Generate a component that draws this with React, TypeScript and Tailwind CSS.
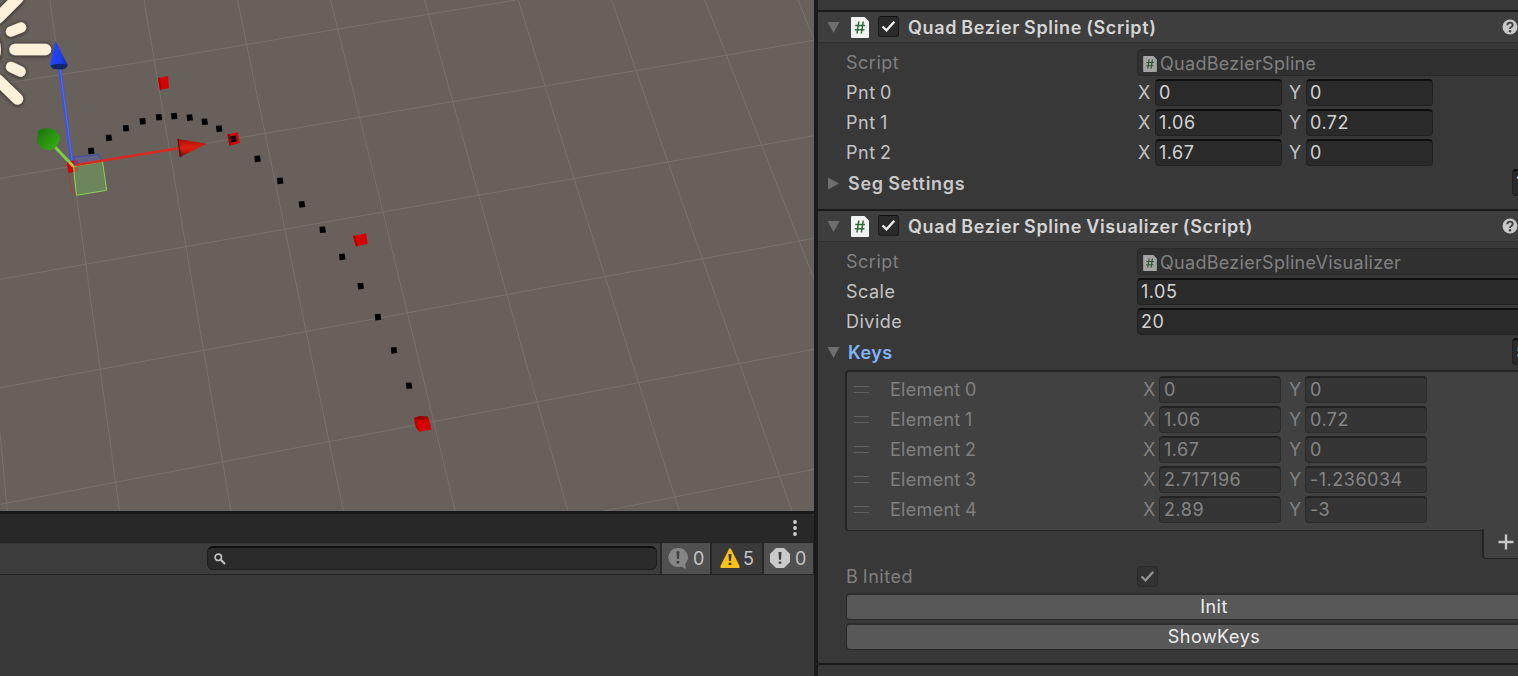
import React from "react";

const FONT = "font-[Inter,'Liberation_Sans',sans-serif]";

const STEEP = [
  "0,432 7.3,511", "50,0 85.8,264 119.5,511", "144,0 186,247 231,511", "237.5,0 284.8,229 343.5,511",
  "330.6,0 383,212 455.3,511", "424.6,0 478.7,195 568,511", "518.2,0 573.8,178 679.3,511",
  "611.7,0 667.9,162 792,511", "704.8,0 762,146 814,279", "798.3,0 814,40",
];
const SHALLOW = [
  "0,84 155,60 338,29 516,0", "0,178.5 265.6,133.3 545,86 814,40.3", "0,279.3 383,212 668,162 814,135.7",
  "0,387.7 408,312.7 814,238.3", "0,504.3 433.5,421.7 814,349.3", "604,511 814,469.3",
];
const DOTS = [
  [91, 151], [108.7, 138], [125.8, 128.3], [142.5, 121.5], [158.8, 117.3], [174, 116.2], [189.5, 117.7],
  [204.5, 121.8], [219, 128.8], [257.3, 159], [280, 181], [301.7, 204.5], [322.4, 229.8], [342, 257],
  [360.5, 286.2], [377.8, 317.2], [393.8, 350.5], [408.8, 385.8],
];

function Scene() {
  return (
    <svg className="block h-[511px] w-[814px] bg-[#67605b]" viewBox="0 0 814 511">
      <defs>
        <linearGradient id="green" x1="0" y1="0" x2="1" y2="1">
          <stop offset="0" stopColor="#1f6d0a" />
          <stop offset="0.45" stopColor="#288f0e" />
          <stop offset="1" stopColor="#36b512" />
        </linearGradient>
        <linearGradient id="red" x1="0" y1="0" x2="0" y2="1">
          <stop offset="0" stopColor="#a31109" />
          <stop offset="0.5" stopColor="#e0200f" />
          <stop offset="0.7" stopColor="#c81a0e" />
          <stop offset="1" stopColor="#5c0c06" />
        </linearGradient>
        <linearGradient id="blue" x1="0" y1="0" x2="1" y2="0">
          <stop offset="0" stopColor="#2146ff" />
          <stop offset="0.6" stopColor="#1c3fe6" />
          <stop offset="1" stopColor="#142c9c" />
        </linearGradient>
        <filter id="glow" x="-50%" y="-50%" width="200%" height="200%">
          <feDropShadow dx="0" dy="0.5" stdDeviation="2" floodColor="#1c1815" floodOpacity="0.75" />
        </filter>
      </defs>
      <g fill="none" stroke="#78726c" strokeWidth="1">
        {STEEP.map((p) => <polyline key={p} points={p} />)}
        {SHALLOW.map((p) => <polyline key={p} points={p} />)}
      </g>
      <g stroke="#fdf1d9" strokeLinecap="round" strokeWidth="11.5" filter="url(#glow)">
        <path d="M15 49.5H45.5M-2 18L18-2M-2 80L17.5 99" />
        <path strokeWidth="10.5" d="M11 31.5L21 27.5M11 67L20.5 71.5" />
        <circle cx="-24" cy="49.5" r="19.2" />
      </g>
      {DOTS.map(([x, y]) => (
        <path key={x} d={`M${x - 3} ${y - 3}l5.600 -.4 .9 6 -5.900 .7z`} fill="#000" />
      ))}
      <g fill="#d60000">
        <path d="M158 78L168 76.300L169 88L160 90Z" />
        <path d="M158 78L160 77.500L161 90L160 90Z" fill="#a90000" />
        <path d="M227.500 134.500L237.500 132.300L239.800 143L229.500 145.800Z" />
        <path d="M227.500 134.500L229.500 134L231 145.500L229.500 145.800Z" fill="#a30000" />
        <path d="M353 236L366 233.300L367.700 243.700L356 246.500Z" />
        <path d="M353 236L355 235.500L357.500 246L356 246.500Z" fill="#a90000" />
        <path d="M414 418L420 416L428.500 417.500L431.500 429.500L419.500 431.700L416 427.500Z" />
        <path d="M414 418L420 416L428 416.500L427.500 419L416.500 420.500Z" fill="#980000" />
        <path d="M414 418L416.500 420L419.500 431.700L416 427.500Z" fill="#b80000" />
        <path d="M66.500 161.500L78 160L79 171L68.500 173Z" />
      </g>
      <path d="M230.300 136.300l5.400-.9.900 6.200-5.600.9z" />
      <path d="M69 173l2 18 6 4" fill="none" stroke="#b5392f" />
      <path d="M74 157L98.500 154.500L102.500 161L75 166z" fill="#5d62a8" fillOpacity=".55" stroke="#3d4eaf" />
      <path d="M73.500 166.500L102.500 161.500L106.700 190.300L76.500 195.300z" fill="#70965a" fillOpacity=".7" stroke="#8bd552" />
      <path d="M59.500 67L71.500 160" stroke="#3a52e8" strokeWidth="3" />
      <path d="M60 67L72 160" stroke="#6c7cf0" strokeWidth="0.6" />
      <path d="M55.500 41L50 65.500Q58.500 68 67.700 65z" fill="url(#blue)" />
      <path d="M50 65.500Q58 62.500 67.700 65Q66.500 68.500 62.500 69.500L53 69Z" fill="#142468" />
      <path d="M76 165L180 148" stroke="#d92a20" strokeWidth="2.400" />
      <path d="M178 139L207 143.800L181 156.500z" fill="url(#red)" />
      <path d="M178 139L181 156.500L180 157Z" fill="#520b06" stroke="#64100a" />
      <path d="M55 147L73 166" stroke="#7bd044" strokeWidth="3" />
      <path d="M70.500 163L74 167.500" stroke="#f0b43c" strokeWidth="2" />
      <path d="M37.800 131Q41 128 49 128Q59 129.500 59.800 138Q59 147 50.500 150Q42 150.500 37 142z" fill="url(#green)" />
    </svg>
  );
}

function ScriptIcon({ small = false }: { small?: boolean }) {
  return (
    <svg className={small ? "h-4 w-[14px] opacity-60" : "h-[21px] w-[18px]"} viewBox="0 0 18 21">
      <path d="M1 0H13.500L18 4.500V20Q18 21 17 21H1Q0 21 0 20V1Q0 0 1 0z" fill="#f2f2f2" />
      <path d="M7.800 4.500L6 16.500M12.200 4.500L10.400 16.500M4.300 8.500H14M3.800 12.800H13.500" stroke="#2c6b34" strokeWidth="1.500" />
    </svg>
  );
}

function Check({ dim = false }: { dim?: boolean }) {
  return (
    <span className={`flex h-[21px] w-[21px] shrink-0 items-center justify-center rounded-[3px] border ${dim ? "border-[#2b2b2b] bg-[#323232]" : "border-[#1b1b1b] border-t-[#101010] bg-[#2a2a2a]"}`}>
      <svg className="h-[15px] w-[15px]" viewBox="0 0 15 15">
        <path d="M1.500 7.500L5.500 11.300L13.300 2.700" fill="none" stroke={dim ? "#929292" : "#ededed"} strokeWidth="2.400" />
      </svg>
    </span>
  );
}

function Arrow({ open = false }: { open?: boolean }) {
  return (
    <svg className="h-[13px] w-[13px] shrink-0" viewBox="0 0 13 13">
      <path d={open ? "M0.500 1H12.500L6.500 12z" : "M1 .5V12.500L12 6.500z"} fill="#6e6e6e" />
    </svg>
  );
}

function Header({ title }: { title: string }) {
  return (
    <div className="flex h-[33px] items-center border-t-2 border-b border-t-[#1a1a1a] border-b-[#303030] bg-[#3e3e3e] pl-[9px]">
      <Arrow open />
      <span className="ml-[11px]"><ScriptIcon /></span>
      <span className="-mt-px ml-[9px]"><Check /></span>
      <span className="ml-[9px] pt-0.5 text-[18px] leading-6 font-semibold tracking-[0.64px] [word-spacing:-1px] text-[#d4d4d4]">{title}</span>
      <svg className="ml-auto h-4 w-4 shrink-0" viewBox="0 0 16 16">
        <circle cx="8" cy="8" r="7.500" fill="#c8c8c8" />
        <path d="M5.300 6.200Q5.300 3.600 8 3.600T10.700 6Q10.700 7.200 9.300 8Q8 8.700 8 9.900" fill="none" stroke="#3e3e3e" strokeWidth="1.900" />
        <circle cx="8" cy="12.200" r="1.200" fill="#3e3e3e" />
      </svg>
    </div>
  );
}

function Field({ value, className = "", dim = false }: { value: string; className?: string; dim?: boolean }) {
  return (
    <span className={`flex h-[27px] shrink-0 items-center overflow-hidden rounded-[4px] border ${dim ? "border-[#2b2b2b] border-t-2 border-t-[#222222] bg-[#353535] text-[#858585]" : "border-[#212121] border-t-2 border-t-[#0e0e0e] bg-[#2a2a2a] text-[#d2d2d2]"} ${className}`}>
      {value}
    </span>
  );
}

function ScriptRow({ name }: { name: string }) {
  return (
    <div className="flex h-[27px] items-center pl-7 text-[#808080]">
      <span className="w-[291px] shrink-0">Script</span>
      <span className="-mr-3 flex h-[27px] flex-1 items-center rounded-[4px] border border-[#292929] bg-[#303030] pt-0.5 pl-[5px]">
        <ScriptIcon small />
        <span className="ml-[3px] tracking-[0.3px]">{name}</span>
      </span>
    </div>
  );
}

function VectorRow({ label, x, y }: { label: string; x: string; y: string }) {
  return (
    <div className="flex h-[27px] items-center pl-7 text-[#c4c4c4]">
      <span className="w-[291px] shrink-0">{label}</span>
      <span className="w-[18px] pl-px">X</span>
      <Field value={x} className="w-[127px] pl-[3px]" />
      <span className="ml-[7px] w-[17px]">Y</span>
      <Field value={y} className="w-[127px] pl-[3px]" />
    </div>
  );
}

function NumberRow({ label, value }: { label: string; value: string }) {
  return (
    <div className="flex h-[27px] items-center pl-7 text-[#c4c4c4]">
      <span className="w-[291px] shrink-0">{label}</span>
      <Field value={value} className="w-[400px] pl-[3px]" />
    </div>
  );
}

function Foldout({ label, open = false, count }: { label: string; open?: boolean; count: string }) {
  return (
    <div className={`flex h-[27px] items-center pl-[9px] font-semibold ${open ? "text-[#81b4ff]" : "text-[#c8c8c8]"}`}>
      <span className="pt-px"><Arrow open={open} /></span>
      <span className={`ml-2 pt-[3px] ${open ? "" : "tracking-[0.75px] [word-spacing:-1px]"}`}>{label}</span>
      <Field value={count} className="-mr-16 ml-auto w-[70px] pl-[3px] font-normal" />
    </div>
  );
}

function ElementRow({ i, x, y }: { i: number; x: string; y: string }) {
  return (
    <div className="flex h-[27px] items-center pl-[7px]">
      <span className="h-[7px] w-[15px] border-y border-[#616161]" />
      <span className="ml-[21px] w-[253px] shrink-0 tracking-[0.3px]">Element {i}</span>
      <span className="w-4">X</span>
      <Field dim value={x} className="w-[122px] pl-1" />
      <span className="ml-2 w-4">Y</span>
      <Field dim value={y} className="w-[122px] pl-1" />
    </div>
  );
}

function InspectorButton({ label }: { label: string }) {
  return (
    <button className="ml-7 flex h-[27px] w-[736px] items-center justify-center rounded-[4px] border border-t-2 border-[#282828] border-t-[#2e2e2e] bg-[#585858] text-[#eeeeee]">
      {label}
    </button>
  );
}

const KEYS = [["0", "0"], ["1.06", "0.72"], ["1.67", "0"], ["2.717196", "-1.236034"], ["2.89", "-3"]];

function Inspector() {
  return (
    <section className="h-full min-w-0 flex-1 overflow-hidden bg-[#383838] pt-[10px] [word-spacing:-1px]">
      <Header title="Quad Bezier Spline (Script)" />
      <div className="mt-[6px] flex flex-col gap-[3px]">
        <ScriptRow name="QuadBezierSpline" />
        <VectorRow label="Pnt 0" x="0" y="0" />
        <VectorRow label="Pnt 1" x="1.06" y="0.72" />
        <VectorRow label="Pnt 2" x="1.67" y="0" />
        <Foldout label="Seg Settings" count="1" />
      </div>
      <div className="mt-[13px]"><Header title="Quad Bezier Spline Visualizer (Script)" /></div>
      <div className="mt-[6px] flex flex-col gap-[3px]">
        <ScriptRow name="QuadBezierSplineVisualizer" />
        <NumberRow label="Scale" value="1.05" />
        <NumberRow label="Divide" value="20" />
        <Foldout label="Keys" open count="5" />
      </div>
      <div className="mt-[5px] -mr-3 ml-[27px] flex h-[161px] flex-col gap-[3px] rounded-[4px] border-t-2 border-b border-l-2 border-[#242424] bg-[#414141] pt-1 text-[#808080]">
        {KEYS.map(([x, y], i) => <ElementRow key={i} i={i} x={x} y={y} />)}
      </div>
      <div className="relative -mt-0.5 -mr-3 ml-auto flex h-[30px] w-[48px] items-center rounded-bl-[4px] border-b border-l-2 border-[#242424] bg-[#414141] pb-1 pl-[14px]">
        <svg className="h-4 w-4" viewBox="0 0 16 16"><path d="M8 .5V15.500M.5 8H15.500" stroke="#c8c8c8" strokeWidth="2.400" /></svg>
      </div>
      <div className="mt-[7px] flex h-[21px] items-center pl-7 text-[#808080]">
        <span className="w-[291px]">B Inited</span>
        <Check dim />
      </div>
      <div className="mt-[6px] flex flex-col gap-[3px]">
        <InspectorButton label="Init" />
        <InspectorButton label="ShowKeys" />
      </div>
      <div className="mt-[13px] h-0.5 bg-[#1a1a1a]" />
    </section>
  );
}

function Console() {
  return (
    <div className="flex flex-1 flex-col border-t-[3px] border-[#191919] bg-[#383838]">
      <div className="flex h-[28px] items-center justify-end rounded-tr-[4px] bg-[#282828] pr-[17px]">
        <svg className="h-4 w-1" viewBox="0 0 4 16" fill="#d0d0d0"><circle cx="2" cy="2" r="1.900" /><circle cx="2" cy="8" r="1.900" /><circle cx="2" cy="14" r="1.900" /></svg>
      </div>
      <div className="flex h-[33px] items-center border-y border-[#232323] bg-[#3c3c3c] pl-[207px] text-[#c4c4c4]">
        <div className="-mt-px flex h-6 w-[450px] items-center rounded-[6px] border border-t-2 border-[#1f1f1f] border-t-[#0d0d0d] bg-[#2a2a2a] pl-[6px]">
          <svg className="h-3 w-3" viewBox="0 0 12 12" fill="none" stroke="#c4c4c4"><circle cx="4.300" cy="4.300" r="3.200" strokeWidth="1.600" /><path d="M6.800 6.800L11 11" strokeWidth="2" /></svg>
        </div>
        <div className="ml-[3px] flex h-full w-[52px] items-center border-x-2 border-[#282828] bg-[#505050] pl-[6px]">
          <svg className="-mt-px h-[22px] w-5" viewBox="0 0 20 22"><path d="M10 1A9.500 9.500 0 1 0 13 19.500L18 22L17.300 17A9.500 9.500 0 0 0 10 1z" fill="#858585" /><path d="M8.500 4.300H11.500L11 12H9zM8.700 14H11.300V16.400H8.700z" fill="#404040" /></svg>
          <span className="ml-[5px]">0</span>
        </div>
        <div className="flex h-full w-[50px] items-center bg-[#3a3a3a] pl-[8px]">
          <svg className="-mt-0.5 h-5 w-5" viewBox="0 0 20 20"><path d="M9 1Q10 -.5 11 1L19.500 18Q20 20 18.500 20H1.500Q0 20 .5 18z" fill="#fcc117" /><path d="M8.500 6H11.500L11 13H9zM8.700 14.800H11.300V17H8.700z" fill="#3a3a3a" /></svg>
          <span className="ml-[3px]">5</span>
        </div>
        <div className="flex h-full w-[52px] items-center border-l-2 border-r border-[#282828] bg-[#505050] pl-[6px]">
          <svg className="-mt-0.5 h-5 w-5" viewBox="0 0 20 20"><path d="M6 0H14L20 6V14L14 20H6L0 14V6z" fill="#cacaca" /><path d="M8.500 4H11.500L11 11.800H9zM8.700 13.400H11.300V15.800H8.700z" fill="#404040" /></svg>
          <span className="ml-[5px]">0</span>
        </div>
      </div>
    </div>
  );
}

export default function App() {
  return (
    <main className={`flex h-[676px] w-[1518px] overflow-hidden bg-[#191919] text-[18px] leading-[26px] tracking-[0.5px] whitespace-nowrap ${FONT}`}>
      <section className="mr-1 flex w-[814px] shrink-0 flex-col">
        <Scene />
        <Console />
      </section>
      <Inspector />
    </main>
  );
}
